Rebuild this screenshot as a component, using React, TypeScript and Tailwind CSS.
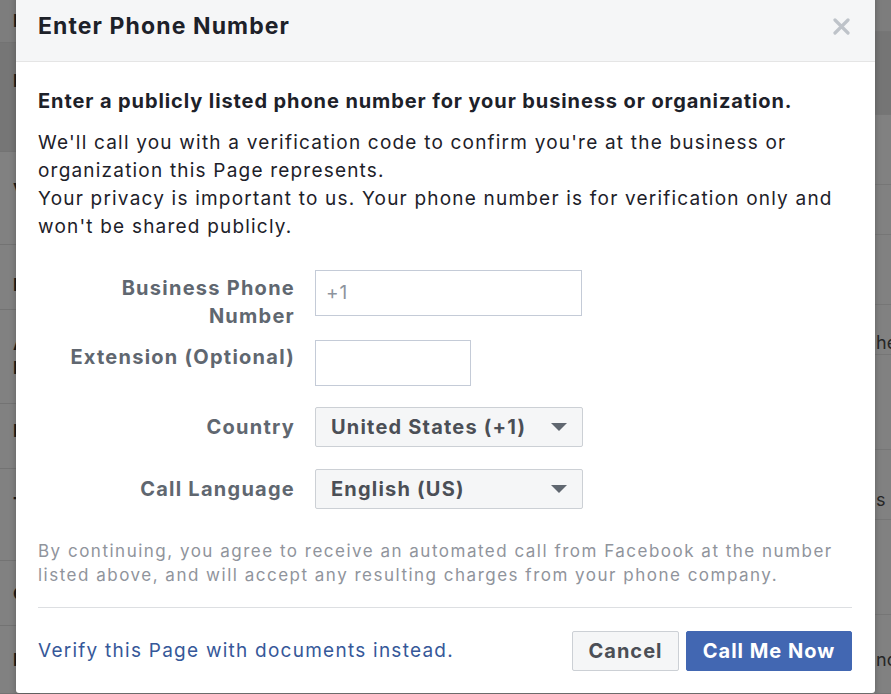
import React from "react";

const leftRows = [
  { h: 43, text: "Page Visibility", bg: "bg-[#7d7d7d]", pt: 9 },
  { h: 109, text: "Inbox", bg: "bg-[#767676]", pt: 26 },
  { h: 93, text: "Visitor Posts", bg: "bg-[#818181]", pt: 26 },
  { h: 65, text: "News Feed", bg: "bg-[#818181]", pt: 28 },
  { h: 94, text: "Audience", bg: "bg-[#818181]", pt: 22, text2: "Interests" },
  { h: 65, text: "Messages", bg: "bg-[#818181]", pt: 15 },
  { h: 92, text: "Tagging Ability", bg: "bg-[#818181]", pt: 23 },
  { h: 65, text: "Country Restrictions", bg: "bg-[#818181]", pt: 21 },
  { h: 68, text: "Inbox", bg: "bg-[#818181]", pt: 22 },
];

const rightRows = [
  { h: 32, text: "", bg: "bg-[#7d7d7d]", pt: 0 },
  { h: 83, text: "", bg: "bg-[#757575]", pt: 0 },
  { h: 70, text: "", bg: "bg-[#818181]", pt: 0 },
  { h: 50, text: "", bg: "bg-[#818181]", pt: 0 },
  { h: 70, text: "", bg: "bg-[#818181]", pt: 0 },
  { h: 50, text: "he", bg: "bg-[#818181]", pt: 26 },
  { h: 95, text: "", bg: "bg-[#818181]", pt: 0 },
  { h: 70, text: "s p", bg: "bg-[#818181]", pt: 38 },
  { h: 95, text: "", bg: "bg-[#818181]", pt: 0 },
  { h: 79, text: "nd", bg: "bg-[#818181]", pt: 33 },
];

function SelectBox({ value }: { value: string }) {
  return (
    <div className="flex h-[40px] w-[268px] items-center justify-between rounded-[2px] border border-[#ccd0d5] bg-[#f5f6f7] pl-[15px] pr-[15px]">
      <span className="text-[20px] font-bold tracking-[1.2px] text-[#4b4f56]">{value}</span>
      <svg width="16" height="8" viewBox="0 0 16 8">
        <path d="M0 0h16L8 8z" fill="#606770" />
      </svg>
    </div>
  );
}

export default function App() {
  return (
    <div className="relative h-[694px] w-[891px] overflow-hidden bg-[#818181] font-['Inter',sans-serif]">
      {/* dimmed page behind the dialog */}
      <div className="flex h-full justify-between">
        <div className="flex w-[40px] flex-col">
          {leftRows.map((r, i) => (
            <div
              key={i}
              className={`shrink-0 overflow-hidden border-b border-[#737373] pl-[13px] text-[18px] font-bold leading-[24px] text-[#1b1b1b] whitespace-nowrap ${r.bg}`}
              style={{ height: r.h, paddingTop: r.pt }}
            >
              <div>{r.text}</div>
              {r.text2 && <div>{r.text2}</div>}
            </div>
          ))}
        </div>
        <div className="flex w-[16px] flex-col">
          {rightRows.map((r, i) => (
            <div
              key={i}
              className={`shrink-0 overflow-hidden border-b border-[#767676] pl-[1px] text-[18px] leading-[24px] text-[#262626] whitespace-nowrap ${r.bg}`}
              style={{ height: r.h, paddingTop: r.pt }}
            >
              {r.text}
            </div>
          ))}
        </div>
      </div>

      {/* dialog */}
      <div className="absolute left-[16px] top-[-8px] flex h-[701px] w-[859px] flex-col overflow-hidden rounded-[3px] bg-white shadow-[0_2px_6px_rgba(0,0,0,0.25)]">
        <div className="flex h-[70px] shrink-0 items-center justify-between border-b border-[#e5e5e5] bg-[#f5f6f7] pl-[22px] pr-[25px]">
          <h1 className="text-[23px] font-bold tracking-[1.1px] text-[#1d2129]">Enter Phone Number</h1>
          <svg width="17" height="17" viewBox="0 0 17 17">
            <path d="M2 2L15 15M15 2L2 15" stroke="#bec3c9" strokeWidth="3.2" strokeLinecap="round" />
          </svg>
        </div>

        <div className="flex flex-1 flex-col pl-[22px] pr-[23px] text-[#1d2129]">
          <p className="mt-[25px] text-[20px] font-bold leading-[28px] tracking-[0.9px]">
            Enter a publicly listed phone number for your business or organization.
          </p>
          <p className="mt-[14px] text-[19px] leading-[28px] tracking-[1.2px]">
            We'll call you with a verification code to confirm you're at the business or organization this Page represents.
            <br />
            Your privacy is important to us. Your phone number is for verification only and won't be shared publicly.
          </p>

          <div className="mt-[29px] flex flex-col pl-[22px]">
            <div className="flex h-[46px] items-start gap-[20px]">
              <div className="w-[235px] pt-[4px] text-right text-[20px] font-bold leading-[28px] tracking-[1.25px] text-[#606770]">
                Business Phone Number
              </div>
              <div className="flex h-[46px] w-[267px] items-center border border-[#c4cbd7] pl-[10px] text-[19px] tracking-[1px] text-[#8d949e]">
                +1
              </div>
            </div>
            <div className="mt-[24px] flex items-start gap-[20px]">
              <div className="w-[235px] pt-[3px] text-right text-[20px] font-bold leading-[28px] tracking-[1.25px] text-[#606770]">
                Extension (Optional)
              </div>
              <div className="h-[46px] w-[156px] border border-[#c4cbd7]" />
            </div>
            <div className="mt-[21px] flex items-center gap-[20px]">
              <div className="w-[235px] text-right text-[20px] font-bold leading-[28px] tracking-[1.25px] text-[#606770]">
                Country
              </div>
              <SelectBox value="United States (+1)" />
            </div>
            <div className="mt-[22px] flex items-center gap-[20px]">
              <div className="w-[235px] text-right text-[20px] font-bold leading-[28px] tracking-[1.25px] text-[#606770]">
                Call Language
              </div>
              <SelectBox value="English (US)" />
            </div>
          </div>

          <p className="mt-[30px] text-[17px] leading-[24px] tracking-[1.5px] text-[#90949c]">
            By continuing, you agree to receive an automated call from Facebook at the number listed above, and will accept
            any resulting charges from your phone company.
          </p>
          <div className="mt-[20px] h-px bg-[#dddfe2]" />

          <div className="mt-[23px] flex items-center justify-between">
            <a className="text-[19px] tracking-[1.25px] text-[#365899]">Verify this Page with documents instead.</a>
            <div className="flex gap-[7px]">
              <button className="h-[40px] w-[107px] rounded-[2px] border border-[#ccd0d5] bg-[#f5f6f7] text-[20px] font-bold tracking-[1px] text-[#4b4f56]">
                Cancel
              </button>
              <button className="h-[40px] w-[166px] rounded-[2px] border border-[#4267b2] bg-[#4267b2] text-[20px] font-bold tracking-[1px] text-white">
                Call Me Now
              </button>
            </div>
          </div>
        </div>
      </div>
    </div>
  );
}
